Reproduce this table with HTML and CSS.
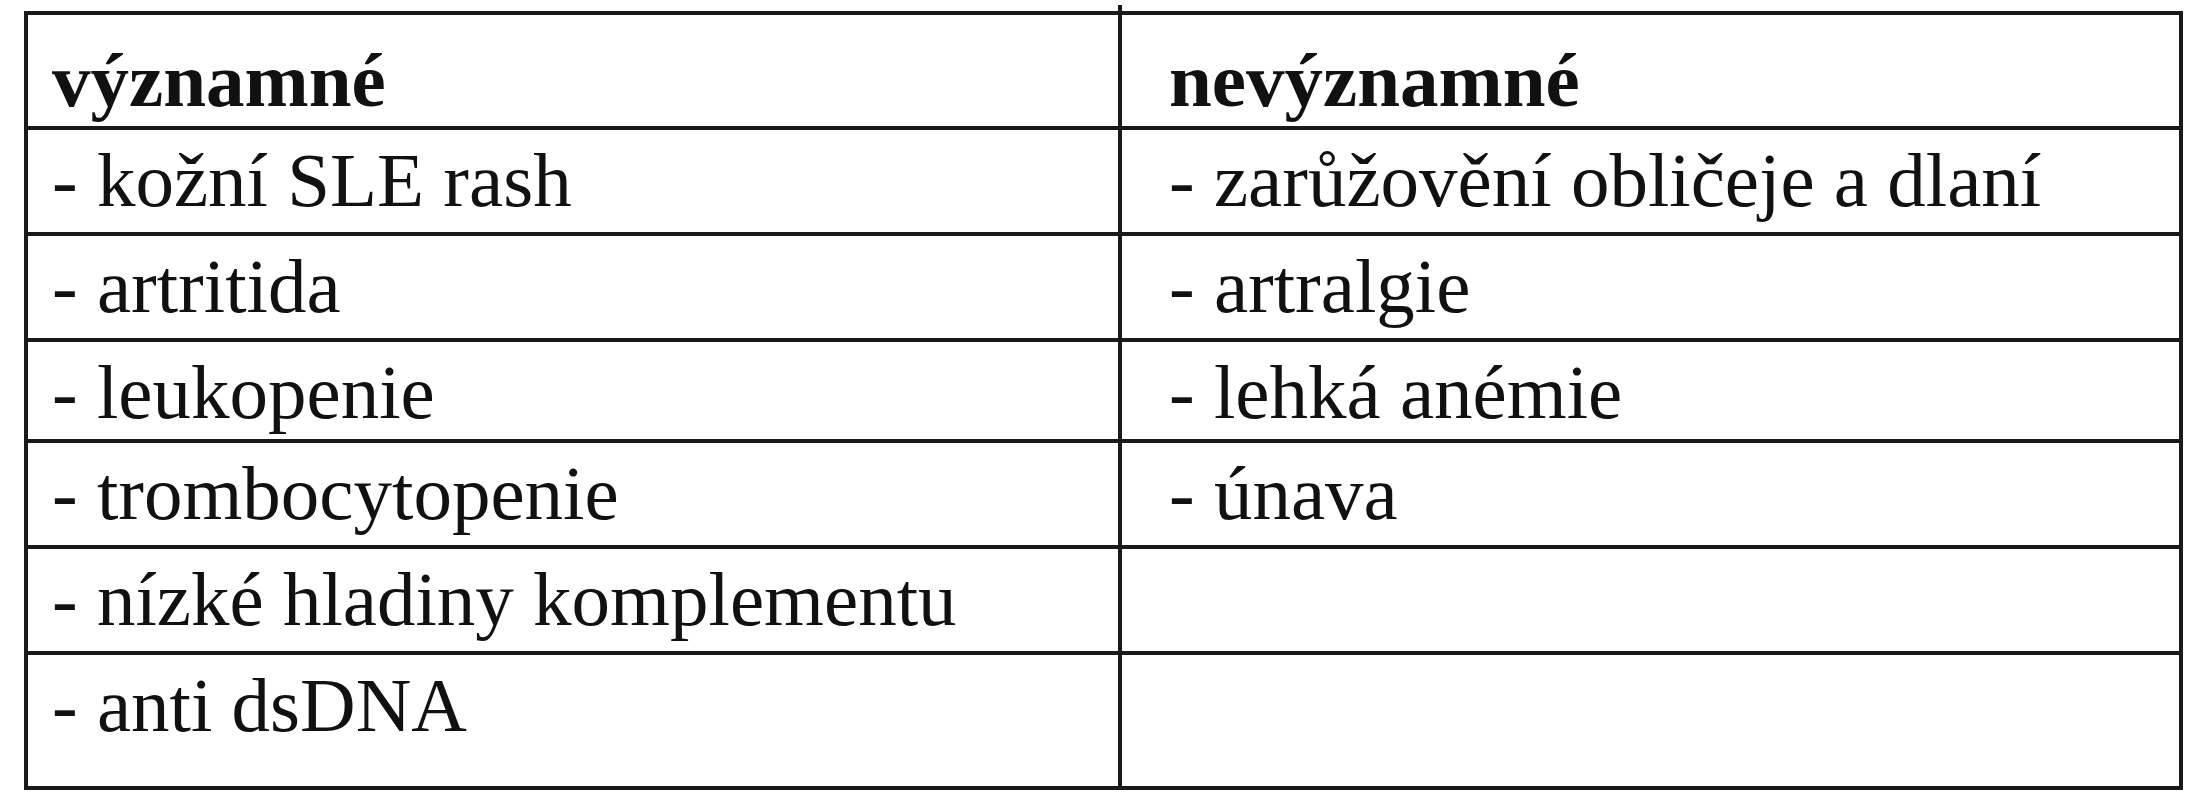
FILE: index.html
```html
<!DOCTYPE html>
<html lang="cs">
<head>
<meta charset="utf-8">
<title>Tabulka</title>
<link rel="stylesheet" href="styles.css">
</head>
<body>
<div class="tbl">
  <div class="cell left head">významné</div>
  <div class="cell right head">nevýznamné</div>
  <div class="cell left">- kožní SLE rash</div>
  <div class="cell right">- zarůžovění obličeje a dlaní</div>
  <div class="cell left">- artritida</div>
  <div class="cell right">- artralgie</div>
  <div class="cell left">- leukopenie</div>
  <div class="cell right">- lehká anémie</div>
  <div class="cell left">- trombocytopenie</div>
  <div class="cell right">- únava</div>
  <div class="cell left">- nízké hladiny komplementu</div>
  <div class="cell right"></div>
  <div class="cell left last">- anti dsDNA</div>
  <div class="cell right last"></div>
</div>
</body>
</html>
```

FILE: styles.css
```css
html, body {
  margin: 0;
  padding: 0;
  background: #ffffff;
}

body {
  padding: 11px 0 0 24px;
  font-family: "Liberation Serif", "Times New Roman", serif;
  color: #111111;
}

.tbl {
  position: relative;
  width: 2159px;
  box-sizing: border-box;
  border: 4px solid #1a1a1a;
  display: grid;
  grid-template-columns: 1094px 1fr;
  grid-template-rows: 115px 106px 106px 101px 106px 106px 131px;
}

.tbl::before {
  content: "";
  position: absolute;
  left: 1090px;
  top: -10px;
  width: 4px;
  height: 10px;
  background: #1a1a1a;
}

.cell {
  box-sizing: border-box;
  border-bottom: 4px solid #1a1a1a;
  font-size: 77px;
  line-height: 88px;
  padding-top: 6px;
  white-space: nowrap;
}

.cell.left {
  border-right: 4px solid #1a1a1a;
  padding-left: 24px;
}

.cell.right {
  padding-left: 47px;
}

.cell.head {
  font-weight: bold;
  padding-top: 21px;
}

.cell.last {
  border-bottom: none;
}
```
